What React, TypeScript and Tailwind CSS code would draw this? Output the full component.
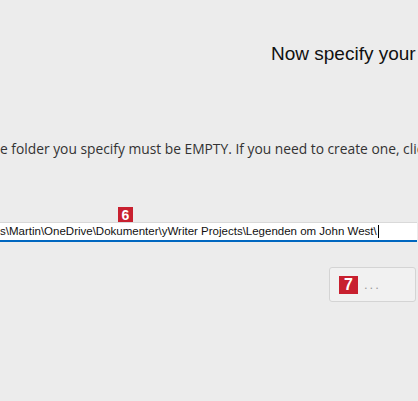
import React from "react";

function Badge({ n, size }: { n: string; size: "s" | "l" }) {
  return (
    <div
      className={
        size === "s"
          ? "flex h-[15px] w-[15px] items-center justify-center bg-[#c8202f] text-[14px] font-bold leading-none text-white"
          : "flex h-[18px] w-[19px] items-center justify-center bg-[#c8202f] text-[16px] font-bold leading-none text-white"
      }
      style={{ fontFamily: "'Liberation Sans', Arial, sans-serif" }}
    >
      {n}
    </div>
  );
}

export default function App() {
  return (
    <div className="flex h-[401px] w-[418px] flex-col overflow-hidden bg-[#ececec]">
      <h1
        className="mt-[44px] whitespace-nowrap pl-[271px] text-[19px] leading-[20px] text-[#111]"
        style={{ fontFamily: "'Liberation Sans', Arial, sans-serif" }}
      >
        Now specify your
      </h1>
      <p
        className="mt-[76px] whitespace-nowrap text-[13.8px] leading-[18px] text-[#333]"
        style={{ fontFamily: "'Open Sans', 'Noto Sans', sans-serif" }}
      >
        e folder you specify must be EMPTY. If you need to create one, click
      </p>
      <div className="mt-[49px] pl-[118px]">
        <Badge n="6" size="s" />
      </div>
      <div className="flex h-[20px] w-[417px] items-center border-t border-[#d9d9d9] border-b-2 border-b-[#0067c0] bg-white">
        <span
          className="whitespace-nowrap text-[11.5px] leading-none text-[#111]"
          style={{ fontFamily: "'Liberation Sans', Arial, sans-serif" }}
        >
          s\Martin\OneDrive\Dokumenter\yWriter Projects\Legenden om John West\
        </span>
        <span className="ml-px h-[13px] w-px bg-black" />
      </div>
      <div className="mt-[25px] flex justify-end pr-[2px]">
        <div className="flex h-[35px] w-[87px] items-center gap-[6px] rounded-[3px] border border-[#d4d4d4] bg-[#f1f1f1] pl-[9px]">
          <Badge n="7" size="l" />
          <span
            className="text-[13px] tracking-[2px] text-[#9a9a9a]"
            style={{ fontFamily: "'Liberation Sans', Arial, sans-serif" }}
          >
            ...
          </span>
        </div>
      </div>
    </div>
  );
}
